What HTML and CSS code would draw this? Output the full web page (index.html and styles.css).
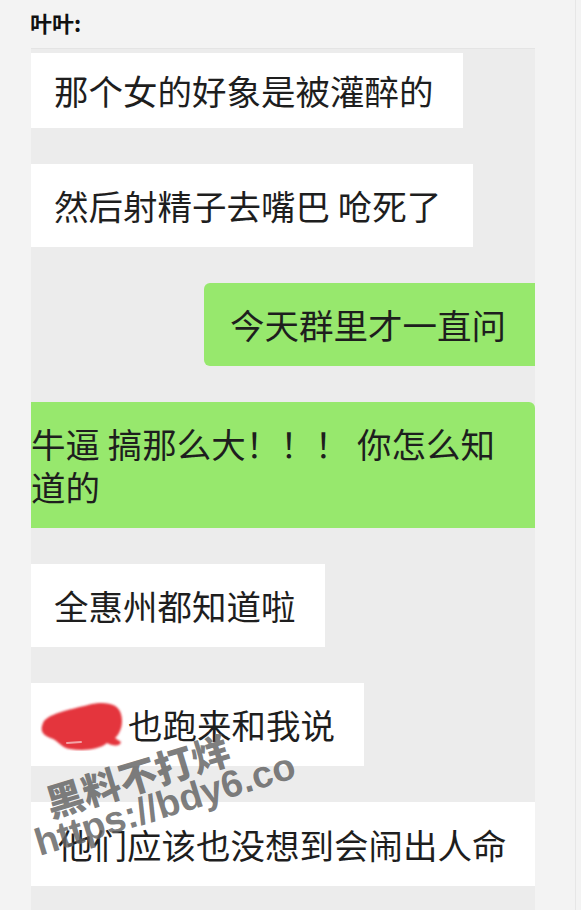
FILE: index.html
```html
<!DOCTYPE html>
<html lang="zh-CN">
<head>
    <meta charset="UTF-8">
    <meta name="viewport" content="width=device-width, initial-scale=1.0">
    <title>叶叶</title>
    <link rel="stylesheet" href="styles.css">
</head>
<body>
    <div class="page">
        <div class="header">叶叶:</div>

        <div class="chat">
            <div class="bubble white first">那个女的好象是被灌醉的</div>
            <div class="bubble white wide-pad">然后射精子去嘴巴 呛死了</div>
            <div class="bubble green mine">今天群里才一直问</div>
            <div class="bubble green full no-left">牛逼 搞那么大！！！ 你怎么知道的</div>
            <div class="bubble white">全惠州都知道啦</div>
            <div class="bubble white">
                <svg class="redact" width="84" height="50" viewBox="0 0 84 50">
                    <defs>
                        <filter id="soft" x="-10%" y="-10%" width="120%" height="120%">
                            <feGaussianBlur stdDeviation="1"/>
                        </filter>
                    </defs>
                    <path d="M3 22 C7 13 28 9 48 4 C64 0 78 2 81 13 C84 23 80 33 75 37 L81 41 C80 46 72 45 67 42 C59 49 43 50 30 48 C22 47 19 41 13 38 C4 35 -1 31 3 22 Z" fill="#e4363d" filter="url(#soft)"/>
                    <path d="M27 42 L41 41" stroke="rgba(255,255,255,0.55)" stroke-width="2" stroke-linecap="round"/>
                </svg>也跑来和我说
            </div>
            <div class="bubble white full">他们应该也没想到会闹出人命</div>
        </div>

        <div class="watermark">
            <span class="wm-line first-line">黑料不打烊</span>
            <span class="wm-line">https://bdy6.co</span>
        </div>
    </div>
</body>
</html>
```

FILE: styles.css
```css
body {
    margin: 0;
    background-color: #f3f3f3;
    font-family: "Noto Sans CJK SC", "Noto Sans", sans-serif;
    color: #1e1e1e;
}

.page {
    position: relative;
    width: 575px;
    min-height: 910px;
    border-right: 1px solid #e6e6e6;
    overflow: hidden;
}

.header {
    height: 48px;
    line-height: 44px;
    padding-left: 30px;
    font-size: 22px;
    font-weight: bold;
    color: #111;
    box-sizing: border-box;
}

.chat {
    display: flex;
    flex-direction: column;
    align-items: flex-start;
    gap: 36px;
    margin-left: 31px;
    width: 504px;
    min-height: 862px;
    padding-top: 4px;
    background-color: #ececec;
    border-top: 1px solid #e4e4e4;
    box-sizing: border-box;
}

.bubble {
    padding: 20px 29px 20px 23px;
    font-size: 34.5px;
    line-height: 43px;
    white-space: nowrap;
}

.bubble.first {
    padding-top: 16px;
    padding-bottom: 16px;
}

.bubble.wide-pad {
    padding-right: 32px;
}

.white {
    background-color: #fff;
}

.green {
    background-color: #97e86d;
}

.mine {
    align-self: flex-end;
    padding-left: 26px;
    border-radius: 6px 0 0 6px;
}

.full {
    align-self: stretch;
    white-space: normal;
    padding-right: 20px;
}

.full.white {
    padding-left: 27px;
    padding-top: 21px;
}

.no-left {
    padding-left: 0;
    border-top-right-radius: 6px;
}

.redact {
    display: inline-block;
    vertical-align: -4px;
    margin: -8px 4px -8px -14px;
}

.watermark {
    position: absolute;
    left: 20px;
    top: 792px;
    transform: rotate(-17deg);
    transform-origin: 0 0;
    font-family: "Liberation Sans", "Noto Sans CJK SC", sans-serif;
    font-size: 38px;
    font-weight: bold;
    line-height: 36px;
    color: rgba(60, 60, 60, 0.66);
    text-shadow: 0 0 1px rgba(255, 255, 255, 0.5);
    white-space: nowrap;
    pointer-events: none;
}

.wm-line {
    display: block;
}

.wm-line.first-line {
    padding-left: 22px;
    font-family: "Noto Sans CJK SC", sans-serif;
    font-weight: 900;
}
```
